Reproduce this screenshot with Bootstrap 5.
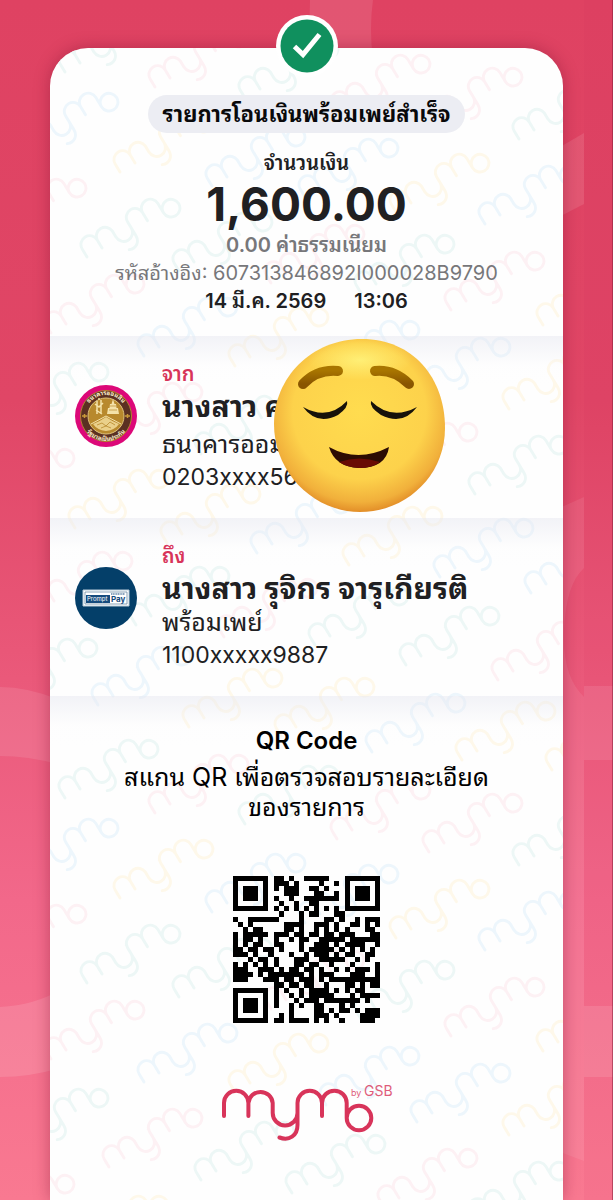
<!DOCTYPE html>
<html lang="th">
<head>
<meta charset="utf-8">
<meta name="viewport" content="width=device-width, initial-scale=1">
<title>MyMo by GSB</title>
<link href="https://cdn.jsdelivr.net/npm/bootstrap@5.3.0/dist/css/bootstrap.min.css" rel="stylesheet">
<style>
body{font-family:Inter,"Noto Sans Thai Looped","Noto Sans Thai","Noto Sans",sans-serif;background:linear-gradient(#df4262 0,#e04666 400px,#f2688a 900px,#f97991 1200px);color:#202022;overflow-x:hidden}
.scene{padding:48px 50px 0;min-height:100vh;overflow:hidden}
.backdrop{inset:0;z-index:0}
.slip{background:#fefefe;border-radius:38px 38px 0 0;box-shadow:0 0 16px rgba(120,15,45,.4);min-height:1152px;z-index:1}
.marks{inset:0;overflow:hidden;border-radius:inherit}
.tick{top:-33px;left:50%;margin-left:-31px;z-index:2}
.pill{background:#ecedf3;color:#09090b;font-size:22px;line-height:38px;padding:0 15px;margin-top:47px}
.t-sm{font-size:20px;line-height:28px}
.t-md{font-size:25px;line-height:33px}
.t-num{font-size:23px;line-height:33px}
.t-name{font-size:30px;line-height:36px}
.t-title{font-size:24px;line-height:34px}
.t-note{font-size:25px;line-height:30px}
.amount{font-size:46px;line-height:54px}
.quiet{color:#77777a}
.brand{color:#d8345a}
.head{height:288px}
.band{background:linear-gradient(rgba(230,231,240,.5),rgba(250,250,252,.1) 30px,transparent 50px)}
.party{padding:24px 25px;gap:25px}
.seal{margin-top:25px}
.emoji{left:224px;top:0}
.qrbox{margin-top:54px}
</style>
</head>
<body>
<main class="scene position-relative">
<svg class="backdrop position-absolute w-100 h-100" viewBox="0 0 613 1200" preserveAspectRatio="none" aria-hidden="true">
<g fill="#fff">
<path opacity=".1" d="M310 0H373Q369 28 373 60H316Q308 30 310 0Z"/>
<path opacity=".1" d="M555 150L584 133V204L555 219Z"/>
<path opacity=".1" d="M0 687Q28 687 60 700V765Q30 756 0 756Z"/>
<path opacity=".12" d="M0 1007Q35 1005 60 990V1068Q30 1077 0 1077Z"/>
<path opacity=".08" d="M555 510L584 497V568Q566 584 564 630T584 697V1161L555 1150Z"/>
<path opacity=".1" d="M584 686H613V760H584Z"/>
<path opacity=".12" d="M584 1006H613V1077H584Z"/>
</g>
<path d="M584 0H612V1200H584Z" fill="#c92550" opacity=".06"/>
<path d="M612 0H613V1200H612Z" fill="#8f2340" opacity=".6"/>
</svg>
<article class="slip position-relative">
<svg class="marks position-absolute w-100 h-100" id="marks" aria-hidden="true">
<defs><symbol id="mymo" viewBox="-3 -29 156 56" overflow="visible"><path fill="none" stroke="currentColor" stroke-width="4" stroke-linecap="round" d="M0 0V-13A12.2 12.2 0 0 1 24.4 -13V0M24.4 -13A12.2 12.2 0 0 1 48.7 -13V-3A12.4 12.4 0 0 0 73.5 -3M55.5 21.5C65 25 73.5 20 73.5 9V-13A12.2 12.2 0 0 1 98 -13V0M98 -13A12.3 12.3 0 0 1 122.7 -13V2A12.3 12.3 0 1 0 147.3 2A12.3 12.3 0 1 0 122.7 2"/></symbol></defs>
</svg>
<svg class="tick position-absolute" width="62" height="62" viewBox="0 0 62 62" role="img" aria-label="สำเร็จ"><circle cx="31" cy="31" r="31" fill="#fff"/><circle cx="31" cy="31" r="26.5" fill="#10905e"/><path d="M18.5 31.5L27 39.5L43.5 19.5" fill="none" stroke="#fff" stroke-width="5"/></svg>

<header class="head position-relative d-flex flex-column align-items-center text-center">
<h1 class="pill rounded-pill fw-bold mb-3">รายการโอนเงินพร้อมเพย์สำเร็จ</h1>
<div class="t-sm fw-semibold">จำนวนเงิน</div>
<div class="amount fw-bold">1,600.00</div>
<div class="t-sm quiet fw-semibold">0.00 ค่าธรรมเนียม</div>
<div class="t-sm quiet">รหัสอ้างอิง: 607313846892I000028B9790</div>
<div class="t-sm fw-semibold d-flex"><time class="me-1 pe-4">14 มี.ค. 2569</time><time>13:06</time></div>
</header>

<section class="band party position-relative d-flex align-items-start">
<svg class="seal flex-shrink-0" width="62" height="62" viewBox="0 0 62 62" role="img" aria-label="ธนาคารออมสิน"><defs><path id="arcTop" d="M10 31A21 21 0 0 1 52 31"/><path id="arcLow" d="M6 31A25 25 0 0 0 56 31"/></defs><circle cx="31" cy="31" r="31" fill="#dc0878"/><circle cx="31" cy="31" r="25.5" fill="#5b3022" stroke="#b3832f" stroke-width="1"/><circle cx="31" cy="31" r="18" fill="#b8892d" stroke="#dfc27a" stroke-width="1"/><path d="M31 31L16 39M31 31L46 39" stroke="#f4e2a9" fill="none"/><path d="M22 16V29M26 15V29M20 19L24 22L28 18M21 25L27 29M23 14H25" stroke="#f4e2a9" stroke-width="1.5" fill="none"/><path d="M38 14L39.500 19H41L41.500 23H43L44 29H32L33 23H34.500L35 19H36.500Z" fill="#f4e2a9"/><path d="M34 25H42M35 21H41" stroke="#b8892d" stroke-width=".7"/><path d="M18 39Q24 37 31 32Q38 37 44 39Q40 45 31 46Q22 45 18 39Z" fill="#ead08a"/><path d="M22 40L27 38L31 41L35 37L40 40M26 43L31 41L36 43" fill="none" stroke="#b8892d" stroke-width=".8"/><path d="M7 31H12M50 31H55M9.5 29V33M52.5 29V33" stroke="#c99938" stroke-width="1.5"/><g fill="#fff1d0" font-size="6" font-weight="700" text-anchor="middle"><text><textPath href="#arcTop" startOffset="50%">ธนาคารออมสิน</textPath></text><text><textPath href="#arcLow" startOffset="50%">รัฐบาลเป็นประกัน</textPath></text></g></svg>
<div><div class="t-sm brand fw-semibold">จาก</div><div class="t-name fw-bold">นางสาว ค</div><div class="t-md pt-1">ธนาคารออม</div><div class="t-num">0203xxxx56</div></div>
<svg class="emoji position-absolute" width="172" height="178" viewBox="0 0 172 178" role="img" aria-label="ใบหน้าโล่งใจ"><defs><radialGradient id="skin" cx=".5" cy=".42" r=".6"><stop offset="0" stop-color="#ffdc4f"/><stop offset=".65" stop-color="#fdd24b"/><stop offset=".87" stop-color="#f1b03b"/><stop offset="1" stop-color="#de8322"/></radialGradient><radialGradient id="shine"><stop offset="0" stop-color="#fff27a" stop-opacity=".9"/><stop offset="1" stop-color="#fff27a" stop-opacity="0"/></radialGradient><linearGradient id="brow" x2="0" y2="1"><stop stop-color="#a87500"/><stop offset="1" stop-color="#895500"/></linearGradient></defs>
<path fill="url(#skin)" d="M88 3C139 3 171 42 171 92C171 140 132 176 86 176C39 176 0 136 0 88C0 42 37 3 88 3Z"/><ellipse cx="86" cy="24" rx="52" ry="20" fill="url(#shine)"/>
<path d="M29 48Q43 33 64 35M135 48Q120 33 101 35" fill="none" stroke="url(#brow)" stroke-width="10" stroke-linecap="round"/><path d="M29 71Q54 85 73 65Q75 71 64 79Q43 90 29 71ZM143 71Q117 85 97 65Q95 71 107 79Q129 90 143 71Z" fill="#17120a"/><path d="M55 111Q84 127 115 111Q112 132 85 132Q61 131 55 111Z" fill="#2c0c03"/><path d="M65 126Q85 119 106 126Q98 132 85 132Q72 131 65 126Z" fill="#690b04"/></svg>
</section>

<section class="band party position-relative d-flex align-items-start">
<svg class="seal flex-shrink-0" width="62" height="62" viewBox="0 0 62 62" role="img" aria-label="PromptPay"><circle cx="31" cy="31" r="31" fill="#043f69"/><path d="M8 23H54V39H8Z" fill="#fff" stroke="#b8cbd8"/><path d="M10 25H52V37H10Z" fill="none" stroke="#567c99" stroke-width=".7"/><path d="M11 28H35V36H11Z" fill="#154b7d"/><text x="12" y="34" font-size="6" fill="#fff">Prompt</text><text x="36" y="35" font-size="8" font-weight="700" fill="#154b7d">Pay</text><path d="M36 27H50" stroke="#154b7d" stroke-width="1.2" stroke-dasharray="1.2 .5"/></svg>
<div><div class="t-sm brand fw-semibold">ถึง</div><div class="t-name fw-bold">นางสาว รุจิกร จารุเกียรติ</div><div class="t-md">พร้อมเพย์</div><div class="t-num">1100xxxxx9887</div></div>
</section>

<section class="band position-relative text-center text-black pt-4 pb-5">
<h2 class="t-title fw-semibold pt-1 mb-1">QR Code</h2>
<p class="t-note mb-0">สแกน QR เพื่อตรวจสอบรายละเอียด<br>ของรายการ</p>
<svg class="qrbox d-block mx-auto" id="qr" width="147" height="147" viewBox="0 0 29 29" shape-rendering="crispEdges" role="img" aria-label="QR Code"></svg>
<svg class="brand d-block mx-auto mt-5" width="172" height="80" viewBox="0 0 172 80" role="img" aria-label="mymo by GSB"><use href="#mymo" x="0" y="16" width="156" height="56"/><text x="130" y="25" font-size="9" fill="currentColor" opacity=".8">by</text><text x="143" y="25" font-size="14" fill="currentColor" opacity=".8">GSB</text></svg>
</section>
</article>
</main>
<script src="https://cdn.jsdelivr.net/npm/bootstrap@5.3.0/dist/js/bootstrap.bundle.min.js"></script>
<script>
const NS = "http://www.w3.org/2000/svg";
const tint = {p:"#fdf1f4", g:"#edf7f6", b:"#edf6fc", y:"#fef8ea"};
// watermark lattice, repeated down the slip
const lattice = [[8,39,"p"],[58,72,"g"],[148,87,"p"],[238,98,"g"],[330,113,"p"],[422,126,"p"],[512,139,"g"],[18,151,"b"],[113,172,"y"],[205,186,"b"],[298,197,"b"],[389,212,"y"],[478,224,"b"],[-14,237,"p"],[80,257,"g"],[172,271,"g"],[264,283,"p"],[354,293,"g"],[444,310,"p"],[536,325,"y"],[44,333,"p"],[137,356,"b"],[228,366,"y"],[319,379,"b"],[410,396,"b"],[502,409,"y"],[8,421,"g"],[102,441,"p"],[194,454,"g"],[285,467,"g"],[377,481,"p"],[468,494,"g"],[-26,507,"p"],[68,528,"y"],[160,543,"y"],[250,553,"b"],[342,565,"y"],[433,577,"b"],[524,593,"b"],[32,610,"p"],[129,625,"g"],[217,637,"p"],[308,645,"g"],[399,665,"g"],[491,680,"p"],[-3,697,"g"],[91,705,"b"],[182,727,"y"],[274,736,"y"],[365,752,"b"],[455,760,"y"],[545,770,"y"]];
const marks = document.getElementById("marks");
for (const shift of [0, 726]) for (const [x, y, c] of lattice) {
  if (shift && y < 60) continue;
  const u = document.createElementNS(NS, "use");
  u.setAttribute("href", "#mymo");
  u.setAttribute("x", -3); u.setAttribute("y", -29);
  u.setAttribute("width", 156); u.setAttribute("height", 56);
  u.setAttribute("transform", `translate(${x - 43} ${y + shift - 48}) rotate(-31) scale(.72)`);
  u.style.color = tint[c];
  marks.append(u);
}
const rows = [
"11111110110100111110001111111","10000010111010000100101000001","10111010101110011010001011101","10111010001110001100101011101","10111010100100111111101011101","10000010010010011000001000001","11111110101010101010101111111","00000000010001011000110000000","10011111100001000011010010111","01010000001111001110100110101","00101100001101001010101000110","10111110111011011011011100011","10110100100101100111110111111","10101100110001001110101111001","11011011010001011111010101010","11101001000100101110101100110","00010110100011100111110010100","10101010100011011001000100001","11100111010110110100101011101","11110101111111010111000111001","11100011101101110101111111111","00000000110110110010001101011","11111110101001011110101011000","10000010100101011111000101111","10111010100010111011111110100","10111010100101001100010100000","10111010000100001101011010111","10000010010100001110100001111","11111110110111101010010001110"];
document.getElementById("qr").innerHTML = `<path d="${rows.map((r, y) => [...r].map((b, x) => b === "1" ? `M${x} ${y}h1v1h-1z` : "").join("")).join("")}"/>`;
</script>
</body>
</html>
